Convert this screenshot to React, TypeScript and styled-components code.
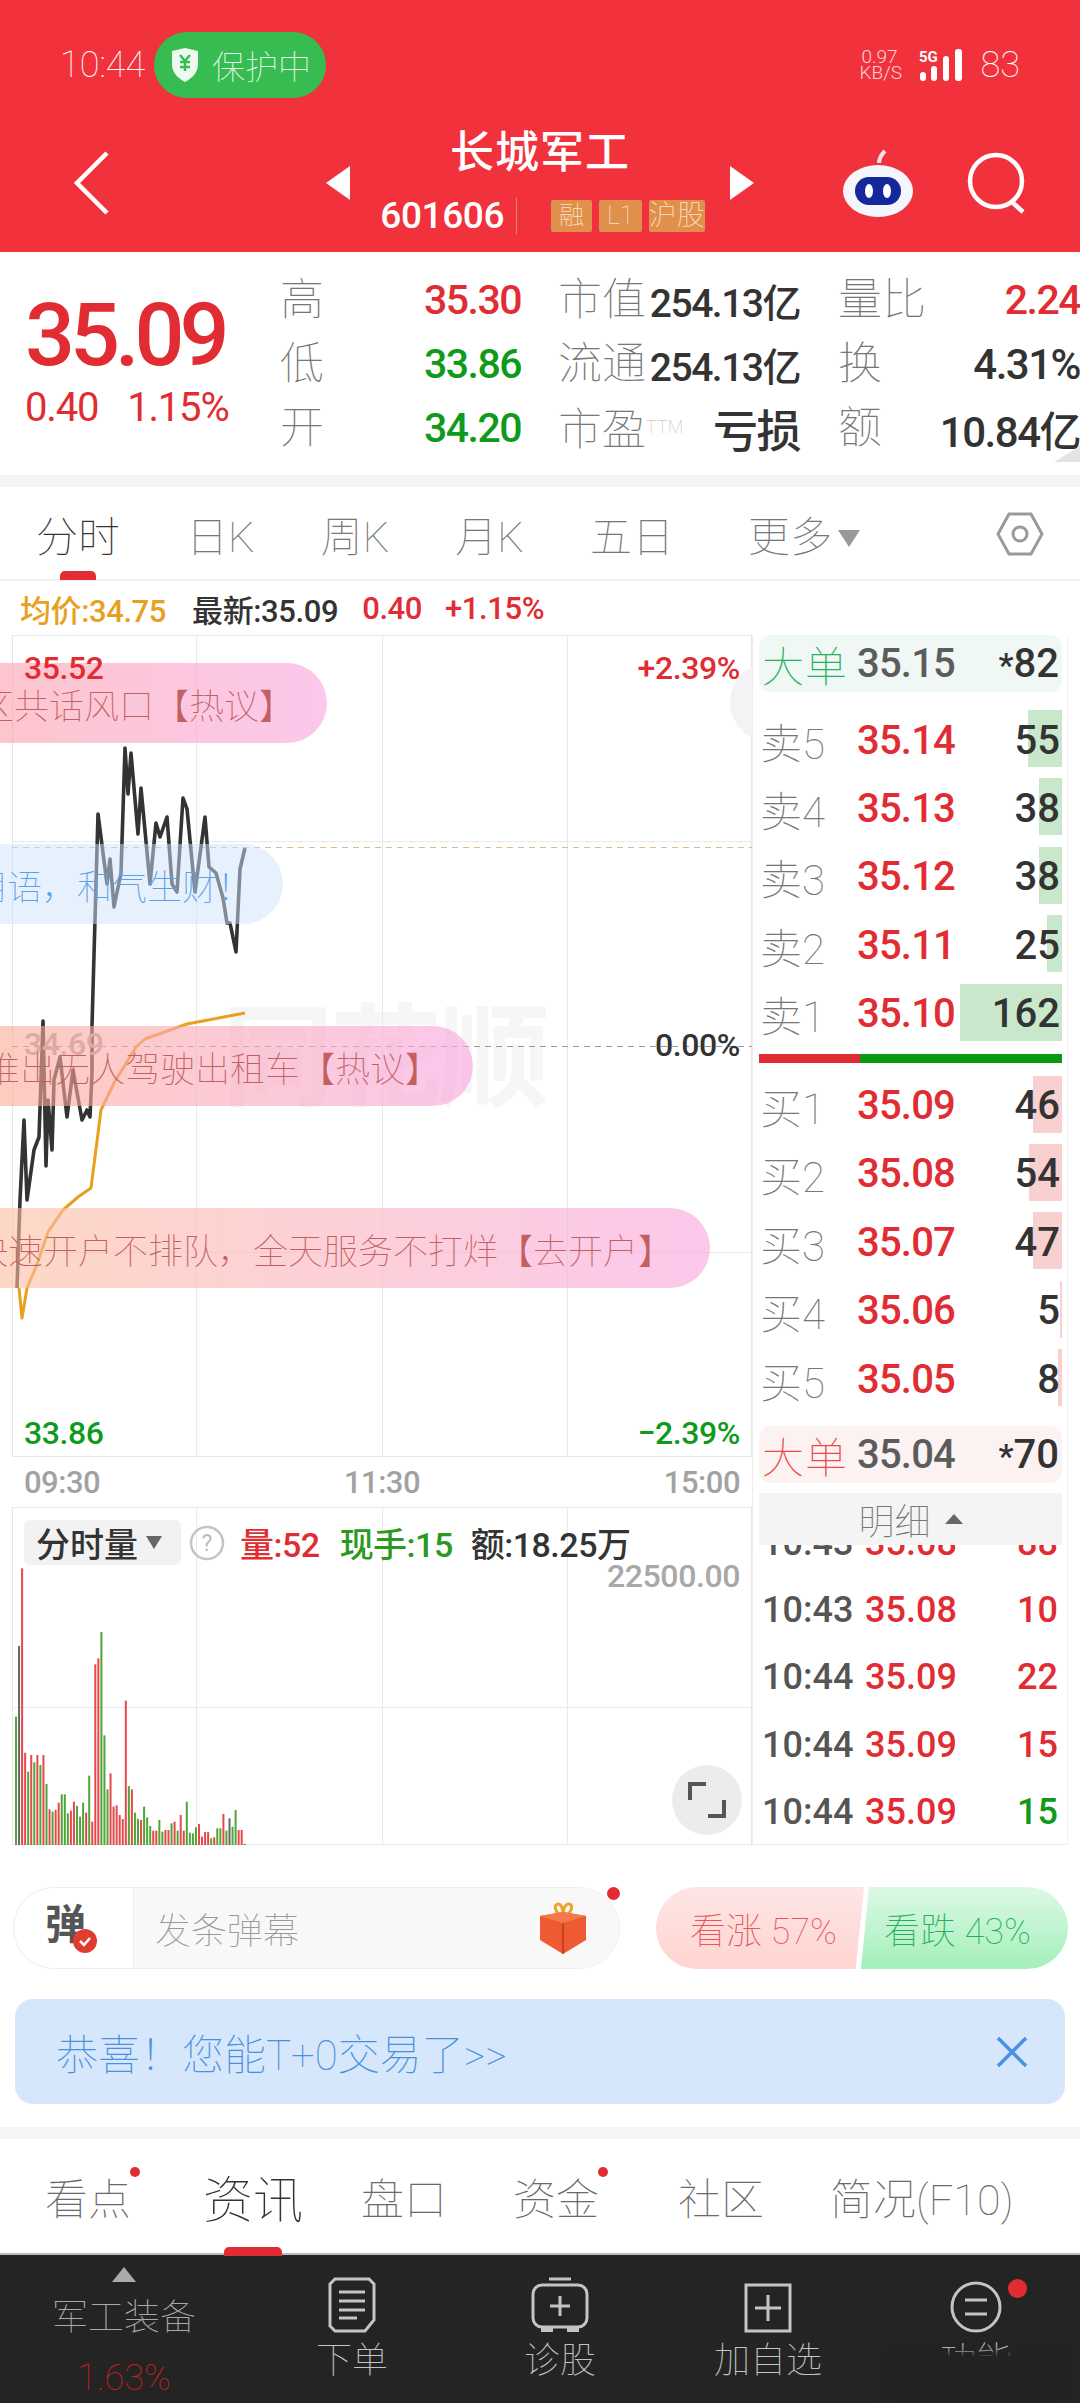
import React from 'react'
import styled, { createGlobalStyle } from 'styled-components'

const RED = '#e12c33'
const GREEN = '#0f9a1c'
const THIN = '#777'

const GlobalStyle = createGlobalStyle`
  html, body {
    margin: 0;
    padding: 0;
    background: #fff;
  }
  * {
    box-sizing: border-box;
  }
  body {
    font-family: Roboto, 'Noto Sans CJK SC', sans-serif;
  }
`

const Page = styled.div`
  position: relative;
  width: 1080px;
  height: 2403px;
  overflow: hidden;
  background: #fff;
`

/* header */
const Header = styled.header`
  height: 252px;
  background: #f1323c;
  color: #fff;
`
const StatusBar = styled.div`
  height: 130px;
  display: flex;
  align-items: center;
  padding: 0 60px;
`
const Clock = styled.span`
  font-size: 36px;
  font-weight: 100;
  color: #fff;
  width: 94px;
`
const Shield = styled.div`
  width: 172px;
  height: 66px;
  border-radius: 33px;
  background: #36bc50;
  display: flex;
  align-items: center;
  gap: 12px;
  padding-left: 16px;
  font-size: 33px;
  font-weight: 100;
  color: #e6f7e9;
`
const StatusRight = styled.div`
  margin-left: auto;
  display: flex;
  align-items: center;
  color: #fbd5d7;
`
const NetSpeed = styled.div`
  font-size: 19px;
  line-height: 16px;
  font-weight: 300;
  text-align: center;
  width: 40px;
`
const Battery = styled.span`
  font-size: 36px;
  font-weight: 100;
  color: #fff;
  margin-left: 17px;
`
const NavBar = styled.div`
  height: 122px;
  display: flex;
  align-items: center;
`
const StockBlock = styled.div`
  width: 380px;
  height: 122px;
  display: flex;
  flex-direction: column;
  align-items: center;
`
const StockName = styled.div`
  font-size: 44px;
  line-height: 46px;
  font-weight: 500;
  letter-spacing: 1px;
`
const CodeRow = styled.div`
  margin: 22px 0 0 5px;
  height: 36px;
  display: flex;
  align-items: center;
`
const Code = styled.span`
  font-size: 37px;
  font-weight: 500;
  letter-spacing: -0.4px;
  padding-right: 12px;
  border-right: 1px solid #e0904a;
  margin-right: 34px;
  line-height: 36px;
`
const Tag = styled.span`
  height: 32px;
  padding: 0 ${p => (p.$wide ? 0 : 8)}px;
  margin-right: ${p => (p.$wide ? 0 : 7)}px;
  background: #e0904a;
  color: #fbe3cf;
  font-size: ${p => (p.$wide ? 28 : 25)}px;
  font-weight: 100;
  line-height: 32px;
  border-radius: 2px;
  white-space: nowrap;
`
const IconSlot = styled.span`
  display: flex;
  margin-left: ${p => p.$left}px;
  margin-bottom: 16px;
`

/* quote */
const Quote = styled.section`
  position: relative;
  height: 223px;
  display: flex;
`
const PriceBlock = styled.div`
  width: 280px;
  padding: 43px 0 0 25px;
  color: ${RED};
`
const BigPrice = styled.div`
  font-size: 88px;
  line-height: 80px;
  font-weight: 500;
  letter-spacing: -5px;
`
const PriceChange = styled.div`
  margin-top: 13px;
  display: flex;
  gap: 29px;
  font-size: 40px;
  line-height: 40px;
  letter-spacing: -1.2px;
`
const Stats = styled.div`
  padding-top: 16px;
  display: grid;
  grid-template-columns: 92px 149px 125px 154px 130px 150px;
  grid-auto-rows: 64px;
  align-items: center;
`
const StatLabel = styled.span`
  font-size: 44px;
  font-weight: 100;
  line-height: 56px;
  color: ${THIN};
  padding-left: ${p => p.$pad || 0}px;
  white-space: nowrap;
`
const Ttm = styled.span`
  font-size: 18px;
  color: #bbb;
  vertical-align: 12px;
`
const StatValue = styled.span`
  justify-self: end;
  white-space: nowrap;
  font-size: ${p => p.$size || 41}px;
  font-weight: 500;
  letter-spacing: -1.5px;
  color: ${p => p.$color || '#333'};
`
const Corner = styled.div`
  position: absolute;
  right: 0;
  bottom: 13px;
  width: 0;
  height: 0;
  border-left: 26px solid transparent;
  border-bottom: 16px solid #e4e4e4;
`
const Band = styled.div`
  height: ${p => p.$h}px;
  background: #f5f5f5;
  margin-top: ${p => p.$top || 0}px;
`

/* period tabs */
const PeriodTabs = styled.nav`
  position: relative;
  height: 94px;
  padding: 0 36px;
  display: flex;
  align-items: center;
  gap: 66px;
  border-bottom: 2px solid #f0f0f0;
`
const PeriodTab = styled.span`
  position: relative;
  font-size: 42px;
  font-weight: 100;
  color: ${p => (p.$active ? '#333' : THIN)};
  white-space: nowrap;
  margin-left: ${p => p.$left || 0}px;
`
const Underline = styled.i`
  position: absolute;
  left: 50%;
  bottom: ${p => p.$bottom}px;
  width: ${p => p.$w}px;
  height: 9px;
  margin-left: -${p => p.$w / 2}px;
  border-radius: 5px 5px 0 0;
  background: ${RED};
`
const MoreArrow = styled.i`
  display: inline-block;
  margin-left: 6px;
  vertical-align: 5px;
  border-left: 11px solid transparent;
  border-right: 11px solid transparent;
  border-top: 17px solid #999;
`
const HexSlot = styled.span`
  position: absolute;
  right: 36px;
  top: 24px;
`

/* price info */
const InfoRow = styled.div`
  height: 54px;
  padding-left: 20px;
  display: flex;
  align-items: center;
  font-size: 31px;
  font-weight: 500;
  letter-spacing: -0.4px;
`
const InfoItem = styled.span`
  color: ${p => p.$color};
  margin-right: ${p => p.$gap}px;
`

/* market */
const Market = styled.section`
  height: 1210px;
  display: flex;
`
const Charts = styled.div`
  width: 752px;
`
const PriceCanvas = styled.div`
  position: relative;
  height: 822px;
  overflow: hidden;
`
const ChartSvg = styled.svg`
  position: absolute;
  left: 0;
  top: 0;
`
const Watermark = styled.div`
  position: absolute;
  left: 222px;
  top: 365px;
  font-size: 112px;
  line-height: 120px;
  font-weight: 700;
  letter-spacing: -4px;
  color: #f6f6f6;
`
const GhostCircle = styled.div`
  position: absolute;
  left: 730px;
  top: 27px;
  width: 80px;
  height: 80px;
  border-radius: 50%;
  background: #f3f3f3;
`
const Pill = styled.div`
  position: absolute;
  left: 0;
  top: ${p => p.$top}px;
  width: ${p => p.$w}px;
  height: 80px;
  padding-right: ${p => p.$pad}px;
  border-radius: 0 40px 40px 0;
  display: flex;
  align-items: center;
  justify-content: flex-end;
  overflow: hidden;
  white-space: nowrap;
  font-size: 35px;
  font-weight: 100;
  color: ${p => (p.$blue ? '#5ba0e8' : '#c25f63')};
  background: ${p =>
    p.$blue
      ? 'rgba(207, 227, 252, 0.5)'
      : `linear-gradient(90deg, ${p.$from}, rgba(250, 170, 225, 0.65))`};
`
const ChartLabel = styled.span`
  position: absolute;
  top: ${p => p.$top}px;
  ${p => (p.$right ? 'right: 12px;' : 'left: 24px;')}
  font-size: 32px;
  line-height: 34px;
  font-weight: 500;
  letter-spacing: -0.4px;
  color: ${p => p.$color};
`
const TimeAxis = styled.div`
  height: 50px;
  padding: 0 12px 0 24px;
  display: flex;
  align-items: center;
  justify-content: space-between;
  font-size: 31px;
  font-weight: 500;
  letter-spacing: -0.5px;
  color: #a2a2a2;
`
const VolCanvas = styled.div`
  position: relative;
  height: 338px;
  overflow: hidden;
`
const VolHead = styled.div`
  position: absolute;
  left: 24px;
  top: 11px;
  display: flex;
  align-items: center;
`
const VolSelect = styled.div`
  width: 157px;
  height: 45px;
  padding-left: 12px;
  border-radius: 6px;
  background: #f2f2f2;
  display: flex;
  align-items: center;
  gap: 8px;
  font-size: 34px;
  font-weight: 500;
  color: #333;
  white-space: nowrap;
`
const DownArrow = styled.i`
  border-left: 8px solid transparent;
  border-right: 8px solid transparent;
  border-top: 13px solid #666;
`
const VolStat = styled.span`
  font-size: 34px;
  font-weight: 500;
  letter-spacing: -0.5px;
  color: ${p => p.$color};
  margin-left: ${p => p.$left}px;
  white-space: nowrap;
`
const VolMax = styled.span`
  position: absolute;
  right: 12px;
  top: 50px;
  font-size: 32px;
  font-weight: 500;
  letter-spacing: -0.4px;
  color: #a8a8a8;
`
const ExpandButton = styled.div`
  position: absolute;
  left: 672px;
  top: 258px;
  width: 70px;
  height: 70px;
  border-radius: 50%;
  background: #ececec;
  display: flex;
  align-items: center;
  justify-content: center;
`

/* order book */
const Book = styled.aside`
  width: 316px;
  padding: 0 5px 0 6px;
  border-left: 1px solid #ececec;
  border-right: 1px solid #f2f2f2;
  border-bottom: 1px solid #ececec;
  display: flex;
  flex-direction: column;
`
const BigOrder = styled.div`
  height: 57px;
  margin-top: ${p => p.$top || 0}px;
  padding: 0 3px 0 3px;
  border-radius: 12px;
  background: ${p => p.$bg};
  display: flex;
  align-items: center;
`
const BigOrderName = styled.span`
  width: 95px;
  font-size: 42px;
  font-weight: 100;
  letter-spacing: 1px;
  color: ${p => p.$color};
`
const BigOrderPrice = styled.span`
  font-size: 40px;
  font-weight: 500;
  letter-spacing: -0.8px;
  color: #5c5c5c;
`
const BigOrderQty = styled.span`
  margin-left: auto;
  font-size: 40px;
  font-weight: 500;
  color: #333;
`
const Star = styled.span`
  font-size: 34px;
`
const LevelList = styled.div`
  margin-top: ${p => p.$top}px;
  display: flex;
  flex-direction: column;
  gap: 11.4px;
`
const LevelRow = styled.div`
  position: relative;
  height: 57px;
  padding: 3px 2px 0 1px;
  display: flex;
  align-items: center;
`
const DepthBar = styled.i`
  position: absolute;
  right: 0;
  top: 0;
  bottom: 0;
  background: ${p => p.$color};
`
const LevelName = styled.span`
  position: relative;
  width: 97px;
  font-size: 42px;
  font-weight: 100;
  color: ${THIN};
`
const LevelPrice = styled.span`
  position: relative;
  font-size: 40px;
  font-weight: 500;
  letter-spacing: -0.8px;
  color: ${RED};
`
const LevelQty = styled.span`
  position: relative;
  margin-left: auto;
  font-size: 40px;
  font-weight: 500;
  color: #333;
`
const RatioBar = styled.div`
  height: 9px;
  margin-top: 13px;
  display: grid;
  grid-template-columns: 101px 1fr;
`
const RatioPart = styled.i`
  background: ${p => p.$color};
`
const DetailToggle = styled.div`
  height: 52px;
  margin-top: 10px;
  background: #f4f4f4;
  display: flex;
  align-items: center;
  justify-content: center;
  gap: 14px;
  font-size: 36px;
  font-weight: 100;
  color: #777;
`
const UpArrow = styled.i`
  border-left: 9px solid transparent;
  border-right: 9px solid transparent;
  border-bottom: 10px solid #666;
`
const DetailList = styled.div`
  flex: 1;
  overflow: hidden;
`
const DetailInner = styled.div`
  margin-top: -36px;
`
const DetailRow = styled.div`
  height: 67.3px;
  padding: 0 4px 0 3px;
  display: flex;
  align-items: center;
  font-size: 36px;
  font-weight: 500;
`
const DetailTime = styled.span`
  width: 103px;
  color: #555;
`
const DetailPrice = styled.span`
  color: ${RED};
`
const DetailQty = styled.span`
  margin-left: auto;
  color: ${p => p.$color};
`

/* barrage */
const ActionRow = styled.div`
  padding: 42px 12px 0 13px;
  display: flex;
  justify-content: space-between;
`
const Barrage = styled.div`
  position: relative;
  width: 607px;
  height: 82px;
  display: flex;
  border: 1px solid #eee;
  border-radius: 41px;
`
const BarrageIcon = styled.div`
  position: relative;
  width: 120px;
  padding-left: 31px;
  font-size: 41px;
  font-weight: 700;
  line-height: 74px;
  color: #555;
  border-right: 1px solid #eee;
`
const CheckBadge = styled.span`
  position: absolute;
  left: 59px;
  top: 41px;
  display: flex;
`
const BarrageInput = styled.div`
  flex: 1;
  padding-left: 21px;
  background: #f8f8f8;
  border-radius: 0 41px 41px 0;
  display: flex;
  align-items: center;
  justify-content: space-between;
  font-size: 36px;
  font-weight: 100;
  color: #999;
`
const GiftSlot = styled.span`
  display: flex;
  margin-right: 32px;
`
const RedDot = styled.i`
  position: absolute;
  right: ${p => p.$right}px;
  top: ${p => p.$top}px;
  width: ${p => p.$d}px;
  height: ${p => p.$d}px;
  border-radius: 50%;
  background: ${RED};
`
const Vote = styled.div`
  width: 412px;
  height: 82px;
  display: flex;
`
const VotePart = styled.div`
  width: ${p => (p.$up ? 208 : 207)}px;
  margin-left: ${p => (p.$up ? 0 : -3)}px;
  border-radius: ${p => (p.$up ? '41px 0 0 41px' : '0 41px 41px 0')};
  clip-path: ${p =>
    p.$up
      ? 'polygon(0 0, 100% 0, 96% 100%, 0 100%)'
      : 'polygon(8px 0, 100% 0, 100% 100%, 0 100%)'};
  background: ${p =>
    p.$up
      ? 'linear-gradient(180deg, #fde6e4, #ffd4d1)'
      : 'linear-gradient(180deg, #dcf9e5, #a4efba)'};
  color: ${p => (p.$up ? '#e4585c' : '#25ae5c')};
  display: flex;
  align-items: center;
  padding-left: ${p => (p.$up ? 34 : 23)}px;
  font-size: 36px;
  font-weight: 100;
  white-space: nowrap;
`
const Banner = styled.div`
  margin: 30px 15px 0;
  height: 105px;
  padding: 0 37px 0 41px;
  border-radius: 18px;
  background: #d6e7fb;
  display: flex;
  align-items: center;
  justify-content: space-between;
  font-size: 42px;
  font-weight: 100;
  color: #4a90e2;
`

/* news tabs */
const NewsTabs = styled.nav`
  height: 114px;
  padding-left: 45px;
  display: flex;
  align-items: center;
  gap: 66px;
`
const NewsTab = styled.span`
  position: relative;
  font-size: ${p => (p.$active ? 50 : 43)}px;
  font-weight: 100;
  color: ${p => (p.$active ? '#333' : '#6a6a6a')};
  white-space: nowrap;
  margin: 0 ${p => (p.$active ? -8 : 0)}px 0 ${p => p.$left || 0}px;
`
const TabDot = styled.i`
  position: absolute;
  right: -9px;
  top: 2px;
  width: 10px;
  height: 10px;
  border-radius: 50%;
  background: ${RED};
`

/* bottom bar */
const BottomBar = styled.footer`
  height: 150px;
  background: #242424;
  border-top: 2px solid #bbb;
  display: grid;
  grid-template-columns: 248px repeat(4, 208px);
`
const SectorItem = styled.div`
  display: flex;
  flex-direction: column;
  align-items: center;
  padding-top: 12px;
  font-size: 36px;
  font-weight: 100;
  color: #aaa;
`
const SectorArrow = styled.i`
  border-left: 12px solid transparent;
  border-right: 12px solid transparent;
  border-bottom: 15px solid #aaa;
`
const SectorName = styled.span`
  margin-top: 14px;
  line-height: 44px;
`
const SectorChange = styled.span`
  margin-top: 16px;
  line-height: 44px;
  color: #c81e1e;
`
const BarItem = styled.div`
  position: relative;
  height: 148px;
  overflow: hidden;
  display: flex;
  flex-direction: column;
  align-items: center;
  padding-top: 20px;
  font-size: 36px;
  font-weight: 100;
  color: #c4c4c4;
`
const BarIcon = styled.span`
  height: 58px;
  display: flex;
  align-items: flex-end;
`
const BarText = styled.span`
  margin-top: 6px;
  line-height: 44px;
`
const Smudge = styled.div`
  position: absolute;
  left: 890px;
  top: 2356px;
  width: 176px;
  height: 40px;
  background: #232323;
  box-shadow: 0 0 8px 4px #232323;
`

const BARS =
  'g650 k438 r205 r758 g815 r765 g787 r765 g795 r765 g852 r928 g935 r930 r908 g883 g883 g940 r932 r905 g918 g950 g908 r938 g827 r965 r493 r475 g396 g706 g868 r820 r920 r916 r945 r957 r602 g858 r868 g938 g957 r960 g920 g952 g978 r992 r992 g960 g995 r990 r990 g970 r965 g992 r945 r992 g905 g998 g1000 g982 r972 r1010 r996 r996 g1015 r1012 g985 g985 r942 g992 k955 g980 g930 r990 r990 k1032'.split(
    ' '
  )
const BAR_COLORS = { r: '#e8484c', g: '#4fa636', k: '#666' }

const PRICE_LINE =
  '17,653 20,565 24,485 27,565 34,515 39,502 43,386 46,531 48,465 52,515 54,445 60,422 67,482 73,435 82,485 87,475 90,482 92,438 92,391 98,179 107,249 110,224 114,272 121,238 125,113 128,159 131,118 138,199 141,153 150,249 156,188 160,202 167,182 172,249 177,257 183,163 187,174 195,257 205,182 209,232 216,238 223,263 227,288 230,288 236,317 240,234 245,213'
const AVG_LINE =
  '19,653 22,683 27,653 36,632 48,597 63,575 78,562 91,553 101,475 114,448 136,412 145,404 187,389 245,378'

const SELLS = [
  ['卖5', '35.14', '55', 34],
  ['卖4', '35.13', '38', 23],
  ['卖3', '35.12', '38', 23],
  ['卖2', '35.11', '25', 15],
  ['卖1', '35.10', '162', 102]
]
const BUYS = [
  ['买1', '35.09', '46', 29],
  ['买2', '35.08', '54', 33],
  ['买3', '35.07', '47', 29],
  ['买4', '35.06', '5', 2],
  ['买5', '35.05', '8', 4]
]
const TICKS = [
  ['10:43', '35.08', '88', RED],
  ['10:43', '35.08', '10', RED],
  ['10:44', '35.09', '22', RED],
  ['10:44', '35.09', '15', RED],
  ['10:44', '35.09', '15', GREEN]
]

const Grid = ({ height, rows }: { height: number; rows: number[] }) => (
  <>
    <rect x="12.5" y="0.5" width="739" height={height - 1} fill="none" stroke="#e6e6e6" />
    {[196, 382, 567].map(x => (
      <line key={x} x1={x + 0.5} x2={x + 0.5} y1="0" y2={height} stroke="#e9e9e9" />
    ))}
    {rows.map(y => (
      <line key={y} x1="12" x2="752" y1={y + 0.5} y2={y + 0.5} stroke="#e9e9e9" />
    ))}
  </>
)

const Levels = ({ rows, color }: { rows: (string | number)[][]; color: string }) => (
  <>
    {rows.map(([name, price, qty, width]) => (
      <LevelRow key={name}>
        <DepthBar $color={color} style={{ width }} />
        <LevelName>{name}</LevelName>
        <LevelPrice>{price}</LevelPrice>
        <LevelQty>{qty}</LevelQty>
      </LevelRow>
    ))}
  </>
)

const App = () => (
  <Page>
    <GlobalStyle />
    <Header>
      <StatusBar>
        <Clock>10:44</Clock>
        <Shield>
          <svg width="30" height="36" viewBox="0 0 30 36">
            <path d="M15 1l13 3v13c0 9-6 14-13 18C8 31 2 26 2 17V4z" fill="#eef9f0" />
            <path
              d="M10 8l5 6 5-6M15 14v10M10 15h10M10 20h10"
              fill="none"
              stroke="#36bc50"
              strokeWidth="2.4"
            />
          </svg>
          保护中
        </Shield>
        <StatusRight>
          <NetSpeed>
            0.97
            <br />
            KB/S
          </NetSpeed>
          <svg width="46" height="34" viewBox="0 0 46 34" style={{ marginLeft: 18 }}>
            <text x="1" y="14" fontSize="15" fontWeight="700" fill="#fff" fontFamily="Roboto">
              5G
            </text>
            <rect x="2" y="24" width="6" height="9" rx="3" fill="#fff" />
            <rect x="13" y="18" width="6" height="15" rx="3" fill="#fff" />
            <rect x="25" y="8" width="6" height="25" rx="3" fill="#fff" />
            <rect x="37" y="1" width="7" height="32" rx="3" fill="#fff" />
          </svg>
          <Battery>83</Battery>
        </StatusRight>
      </StatusBar>
      <NavBar>
        <IconSlot $left={72}>
          <svg width="40" height="66" viewBox="0 0 40 66">
            <path d="M35 3L5 33l30 30" fill="none" stroke="#fff" strokeWidth="4.5" />
          </svg>
        </IconSlot>
        <IconSlot $left={214}>
          <svg width="24" height="34" viewBox="0 0 24 34">
            <path d="M24 0v34L0 17z" fill="#fff" />
          </svg>
        </IconSlot>
        <StockBlock>
          <StockName>长城军工</StockName>
          <CodeRow>
            <Code>601606</Code>
            <Tag>融</Tag>
            <Tag>L1</Tag>
            <Tag $wide>沪股</Tag>
          </CodeRow>
        </StockBlock>
        <IconSlot $left={0}>
          <svg width="24" height="34" viewBox="0 0 24 34">
            <path d="M0 0v34l24-17z" fill="#fff" />
          </svg>
        </IconSlot>
        <IconSlot $left={87}>
          <svg width="74" height="68" viewBox="0 0 74 68">
            <path d="M38 14c0-5 2-8 6-12" fill="none" stroke="#f4dfe2" strokeWidth="4" />
            <ellipse cx="37" cy="42" rx="35" ry="26" fill="#f4f6fb" />
            <rect x="14" y="28" width="46" height="28" rx="14" fill="#14289c" />
            <ellipse cx="28" cy="42" rx="4" ry="7" fill="#fff" />
            <ellipse cx="46" cy="42" rx="4" ry="7" fill="#fff" />
          </svg>
        </IconSlot>
        <IconSlot $left={50}>
          <svg width="64" height="62" viewBox="0 0 64 62">
            <circle cx="31" cy="29" r="26" fill="none" stroke="#fff" strokeWidth="4.5" />
            <path d="M47 50l11 10" stroke="#fff" strokeWidth="4.5" />
          </svg>
        </IconSlot>
      </NavBar>
    </Header>

    <Quote>
      <PriceBlock>
        <BigPrice>35.09</BigPrice>
        <PriceChange>
          <span>0.40</span>
          <span>1.15%</span>
        </PriceChange>
      </PriceBlock>
      <Stats>
        <StatLabel>高</StatLabel>
        <StatValue $color={RED}>35.30</StatValue>
        <StatLabel $pad={37}>市值</StatLabel>
        <StatValue $size={39}>254.13亿</StatValue>
        <StatLabel $pad={38}>量比</StatLabel>
        <StatValue $color={RED}>2.24</StatValue>
        <StatLabel>低</StatLabel>
        <StatValue $color={GREEN}>33.86</StatValue>
        <StatLabel $pad={37}>流通</StatLabel>
        <StatValue $size={39}>254.13亿</StatValue>
        <StatLabel $pad={38}>换</StatLabel>
        <StatValue $size={42}>4.31%</StatValue>
        <StatLabel>开</StatLabel>
        <StatValue $color={GREEN}>34.20</StatValue>
        <StatLabel $pad={37}>
          市盈<Ttm>TTM</Ttm>
        </StatLabel>
        <StatValue $size={45}>亏损</StatValue>
        <StatLabel $pad={38}>额</StatLabel>
        <StatValue $size={42}>10.84亿</StatValue>
      </Stats>
      <Corner />
    </Quote>
    <Band $h={12} />

    <PeriodTabs>
      <PeriodTab $active>
        分时
        <Underline $w={36} $bottom={-16} />
      </PeriodTab>
      <PeriodTab>日K</PeriodTab>
      <PeriodTab>周K</PeriodTab>
      <PeriodTab>月K</PeriodTab>
      <PeriodTab>五日</PeriodTab>
      <PeriodTab $left={8}>
        更多
        <MoreArrow />
      </PeriodTab>
      <HexSlot>
        <svg width="48" height="46" viewBox="0 0 48 46">
          <path d="M13 3h22l11 20-11 20H13L2 23z" fill="none" stroke="#9a9a9a" strokeWidth="3" />
          <circle cx="24" cy="23" r="7" fill="none" stroke="#9a9a9a" strokeWidth="3" />
        </svg>
      </HexSlot>
    </PeriodTabs>

    <InfoRow>
      <InfoItem $color="#e8a020" $gap={26}>
        均价:34.75
      </InfoItem>
      <InfoItem $color="#333" $gap={24}>
        最新:35.09
      </InfoItem>
      <InfoItem $color={RED} $gap={23}>
        0.40
      </InfoItem>
      <InfoItem $color={RED} $gap={0}>
        +1.15%
      </InfoItem>
    </InfoRow>

    <Market>
      <Charts>
        <PriceCanvas>
          <Watermark>同花顺</Watermark>
          <ChartSvg width="752" height="822" viewBox="0 0 752 822">
            <Grid height={822} rows={[206, 617]} />
            <line x1="12" x2="752" y1="212.5" y2="212.5" stroke="#d9b98e" strokeDasharray="6 5" />
            <line x1="12" x2="752" y1="411.5" y2="411.5" stroke="#999" strokeDasharray="6 5" />
            <polyline points={PRICE_LINE} fill="none" stroke="#333" strokeWidth="3.6" strokeLinejoin="round" />
            <polyline points={AVG_LINE} fill="none" stroke="#e8a020" strokeWidth="3" strokeLinejoin="round" />
          </ChartSvg>
          <GhostCircle />
          <ChartLabel $top={392} $color="#aaa">
            34.69
          </ChartLabel>
          <Pill $top={28} $w={327} $pad={33} $from="rgba(252, 160, 172, 0.6)">
            区共话风口【热议】
          </Pill>
          <Pill $top={209} $w={283} $pad={31} $blue>
            用语，和气生财！
          </Pill>
          <Pill $top={391} $w={473} $pad={33} $from="rgba(252, 170, 150, 0.6)">
            推出无人驾驶出租车【热议】
          </Pill>
          <Pill $top={573} $w={710} $pad={37} $from="rgba(252, 190, 160, 0.6)">
            快速开户不排队，全天服务不打烊【去开户】
          </Pill>
          <ChartLabel $top={16} $color={RED}>
            35.52
          </ChartLabel>
          <ChartLabel $top={16} $right $color={RED}>
            +2.39%
          </ChartLabel>
          <ChartLabel $top={393} $right $color="#333">
            0.00%
          </ChartLabel>
          <ChartLabel $top={781} $color={GREEN}>
            33.86
          </ChartLabel>
          <ChartLabel $top={781} $right $color={GREEN}>
            −2.39%
          </ChartLabel>
        </PriceCanvas>
        <TimeAxis>
          <span>09:30</span>
          <span>11:30</span>
          <span>15:00</span>
        </TimeAxis>
        <VolCanvas>
          <ChartSvg width="752" height="338" viewBox="0 0 752 338">
            <Grid height={338} rows={[200]} />
            {BARS.map((bar, i) => {
              const top = Number(bar.slice(1)) / 3 - 7
              const x = 15 + i * 3.05
              return <rect key={i} x={x} y={top} width="2" height={338 - top} fill={BAR_COLORS[bar[0]]} />
            })}
          </ChartSvg>
          <VolHead>
            <VolSelect>
              分时量
              <DownArrow />
            </VolSelect>
            <svg width="36" height="36" viewBox="0 0 36 36" style={{ marginLeft: 8 }}>
              <circle cx="18" cy="18" r="16" fill="none" stroke="#c4c4c4" strokeWidth="2.5" />
              <text x="18" y="26" textAnchor="middle" fontSize="23" fill="#bbb" fontFamily="Roboto">
                ?
              </text>
            </svg>
            <VolStat $color={RED} $left={15}>
              量:52
            </VolStat>
            <VolStat $color="#2a9a1e" $left={20}>
              现手:15
            </VolStat>
            <VolStat $color="#333" $left={18}>
              额:18.25万
            </VolStat>
          </VolHead>
          <VolMax>22500.00</VolMax>
          <ExpandButton>
            <svg width="40" height="40" viewBox="0 0 40 40">
              <path d="M3 20V4h16M37 20v16H21" fill="none" stroke="#555" strokeWidth="4" />
            </svg>
          </ExpandButton>
        </VolCanvas>
      </Charts>

      <Book>
        <BigOrder $bg="#eff8f4">
          <BigOrderName $color="#27b060">大单</BigOrderName>
          <BigOrderPrice>35.15</BigOrderPrice>
          <BigOrderQty>
            <Star>*</Star>82
          </BigOrderQty>
        </BigOrder>
        <LevelList $top={18}>
          <Levels rows={SELLS} color="#c9e8cb" />
        </LevelList>
        <RatioBar>
          <RatioPart $color={RED} />
          <RatioPart $color="#0a9a10" />
        </RatioBar>
        <LevelList $top={13}>
          <Levels rows={BUYS} color="#f8d0d0" />
        </LevelList>
        <BigOrder $bg="#fdf2f2" $top={20}>
          <BigOrderName $color="#ea4a4a">大单</BigOrderName>
          <BigOrderPrice>35.04</BigOrderPrice>
          <BigOrderQty>
            <Star>*</Star>70
          </BigOrderQty>
        </BigOrder>
        <DetailToggle>
          明细
          <UpArrow />
        </DetailToggle>
        <DetailList>
          <DetailInner>
            {TICKS.map(([time, price, qty, color], i) => (
              <DetailRow key={i}>
                <DetailTime>{time}</DetailTime>
                <DetailPrice>{price}</DetailPrice>
                <DetailQty $color={color}>{qty}</DetailQty>
              </DetailRow>
            ))}
          </DetailInner>
        </DetailList>
      </Book>
    </Market>

    <ActionRow>
      <Barrage>
        <BarrageIcon>
          弹
          <CheckBadge>
            <svg width="24" height="24" viewBox="0 0 24 24">
              <circle cx="12" cy="12" r="12" fill="#df3d32" />
              <path d="M7 12l4 4 6-7" fill="none" stroke="#fff" strokeWidth="2.5" />
            </svg>
          </CheckBadge>
        </BarrageIcon>
        <BarrageInput>
          发条弹幕
          <GiftSlot>
            <svg width="48" height="52" viewBox="0 0 48 52">
              <path d="M24 14c-8-2-10-12-5-12s5 8 5 12c0-4 1-12 6-12s3 10-6 12z" fill="none" stroke="#e8a52a" strokeWidth="3" />
              <path d="M1 14l23-4 23 4v24L24 52 1 38z" fill="#ee5a32" />
              <path d="M1 14l23 7 23-7-23-4z" fill="#f47a4a" />
              <path d="M24 21v31" stroke="#c8401f" strokeWidth="2" />
            </svg>
          </GiftSlot>
        </BarrageInput>
        <RedDot $right={-1} $top={-1} $d={13} />
      </Barrage>
      <Vote>
        <VotePart $up>看涨 57%</VotePart>
        <VotePart>看跌 43%</VotePart>
      </Vote>
    </ActionRow>

    <Banner>
      恭喜！您能T+0交易了&gt;&gt;
      <svg width="32" height="32" viewBox="0 0 32 32">
        <path d="M2 2l28 28M30 2L2 30" stroke="#4a90e2" strokeWidth="3.5" />
      </svg>
    </Banner>
    <Band $h={12} $top={23} />

    <NewsTabs>
      <NewsTab>
        看点
        <TabDot />
      </NewsTab>
      <NewsTab $active $left={6}>
        资讯
        <Underline $w={58} $bottom={-24} />
      </NewsTab>
      <NewsTab>盘口</NewsTab>
      <NewsTab>
        资金
        <TabDot />
      </NewsTab>
      <NewsTab $left={13}>社区</NewsTab>
      <NewsTab>简况(F10)</NewsTab>
    </NewsTabs>

    <BottomBar>
      <SectorItem>
        <SectorArrow />
        <SectorName>军工装备</SectorName>
        <SectorChange>1.63%</SectorChange>
      </SectorItem>
      <BarItem>
        <BarIcon>
          <svg width="48" height="56" viewBox="0 0 48 56">
            <path d="M7 2h34l5 5v36l-9 11H7l-5-5V7z" fill="none" stroke="#c4c4c4" strokeWidth="3" />
            <path d="M11 15h26M11 24h26M11 33h26M11 41h18" stroke="#c4c4c4" strokeWidth="3" />
          </svg>
        </BarIcon>
        <BarText>下单</BarText>
      </BarItem>
      <BarItem>
        <BarIcon>
          <svg width="58" height="56" viewBox="0 0 58 56">
            <path d="M18 2h22" stroke="#c4c4c4" strokeWidth="3" />
            <rect x="2" y="8" width="54" height="42" rx="9" fill="none" stroke="#c4c4c4" strokeWidth="3" />
            <path d="M29 19v20M19 29h20" stroke="#c4c4c4" strokeWidth="3" />
            <path d="M10 53h12M36 53h12" stroke="#c4c4c4" strokeWidth="4" />
          </svg>
        </BarIcon>
        <BarText>诊股</BarText>
      </BarItem>
      <BarItem>
        <BarIcon>
          <svg width="48" height="50" viewBox="0 0 48 50">
            <rect x="2" y="2" width="44" height="46" fill="none" stroke="#c4c4c4" strokeWidth="3" />
            <path d="M24 12v26M11 25h26" stroke="#c4c4c4" strokeWidth="3" />
          </svg>
        </BarIcon>
        <BarText>加自选</BarText>
      </BarItem>
      <BarItem>
        <BarIcon>
          <svg width="52" height="52" viewBox="0 0 52 52">
            <circle cx="26" cy="26" r="24" fill="none" stroke="#c4c4c4" strokeWidth="3" />
            <path d="M15 19h22M15 33h22" stroke="#c4c4c4" strokeWidth="3" />
          </svg>
        </BarIcon>
        <BarText>功能</BarText>
        <RedDot $right={53} $top={24} $d={19} />
      </BarItem>
    </BottomBar>
    <Smudge />
  </Page>
)

export default App
